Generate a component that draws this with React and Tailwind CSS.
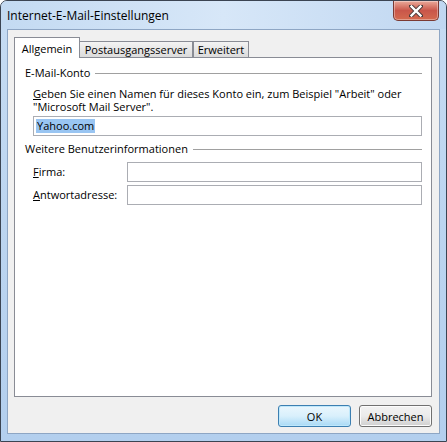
import React from 'react';

const font = { fontFamily: '"Open Sans", "Noto Sans", sans-serif' };

function CloseButton() {
  return (
    <div className="absolute right-[7px] top-0 w-[46px] h-[20px] rounded-b-[5px] border border-t-0 border-[#7b3a33] bg-gradient-to-b from-[#e9a99b] via-[#c9564a] to-[#d46a4f] flex items-center justify-center shadow-[inset_0_0_0_1px_rgba(255,255,255,0.35)]">
      <svg width="14" height="12" viewBox="0 0 14 12">
        <path
          d="M2 1 L12 11 M12 1 L2 11"
          stroke="#4a3a3a"
          strokeWidth="4.2"
          strokeLinecap="square"
          fill="none"
        />
        <path
          d="M2.5 1.5 L11.5 10.5 M11.5 1.5 L2.5 10.5"
          stroke="#ffffff"
          strokeWidth="2.4"
          strokeLinecap="square"
          fill="none"
        />
      </svg>
    </div>
  );
}

function Tab({ label, active, className = '' }) {
  if (active) {
    return (
      <div className={`relative z-10 h-[21px] pt-[3px] text-center bg-white border border-b-0 border-[#898c95] ${className}`}>
        {label}
      </div>
    );
  }
  return (
    <div className={`mt-[4px] h-[17px] text-center bg-gradient-to-b from-[#f3f3f3] to-[#dadada] border border-b-0 border-[#898c95] leading-[16px] ${className}`}>
      {label}
    </div>
  );
}

function GroupTitle({ children }) {
  return (
    <div className="flex items-center gap-[5px] h-[14px]">
      <span>{children}</span>
      <div className="flex-1 h-px bg-[#a0a0a0]" />
    </div>
  );
}

function Field({ children, className = '' }) {
  return (
    <div className={`h-[20px] border border-[#abadb3] bg-white ${className}`}>{children}</div>
  );
}

export default function App() {
  return (
    <div
      className="relative w-[447px] h-[442px] flex flex-col bg-gradient-to-b from-[#c6dcf3] via-[#bcd5f0] to-[#b3cfee] border border-[#3b4452] rounded-t-[7px] text-[11px] text-black overflow-hidden"
      style={font}
    >
      <div className="h-[28px] flex items-center pl-[6px] pt-[1px] bg-gradient-to-r from-[#c3daf2] via-[#d7e7f8] to-[#c0d7f1]">
        <span className="text-[12px]">Internet-E-Mail-Einstellungen</span>
      </div>
      <CloseButton />

      <div className="flex-1 mx-[6px] mb-[7px] border border-[#8ea6c4] bg-[#f0f0f0] flex flex-col pl-[6px] pr-[7px] pt-[7px]">
        <div className="flex items-end">
          <Tab label="Allgemein" active className="w-[66px]" />
          <Tab label="Postausgangsserver" className="w-[114px] -ml-px" />
          <Tab label="Erweitert" className="w-[56px]" />
        </div>

        <div className="-mt-px h-[340px] bg-white border border-[#898c95] pl-[10px] pr-[9px] pt-[8px]">
          <GroupTitle>E-Mail-Konto</GroupTitle>
          <div className="pl-[8px] pt-[7px]">
            <p className="leading-[13px]">
              <span className="underline">G</span>eben Sie einen Namen für dieses Konto ein, zum Beispiel "Arbeit" oder
              <br />
              "Microsoft Mail Server".
            </p>
            <Field className="mt-[3px] flex items-center pl-[2px]">
              <span className="bg-[#99c5f2] leading-[14px] px-px">Yahoo.com</span>
            </Field>
          </div>

          <div className="mt-[6px]">
            <GroupTitle>Weitere Benutzerinformationen</GroupTitle>
          </div>
          <div className="pl-[8px] pt-[6px] flex flex-col gap-[3px]">
            <div className="flex items-center">
              <span className="w-[94px]">
                <span className="underline">F</span>irma:
              </span>
              <Field className="flex-1" />
            </div>
            <div className="flex items-center">
              <span className="w-[94px]">
                <span className="underline">A</span>ntwortadresse:
              </span>
              <Field className="flex-1" />
            </div>
          </div>
        </div>

        <div className="flex justify-end gap-[8px] mt-[8px]">
          <button className="w-[73px] h-[22px] rounded-[3px] border border-[#3c7fb1] bg-gradient-to-b from-[#eaf6fd] via-[#d9f0fc] to-[#a7d9f5] shadow-[inset_0_0_0_1px_#bfe8fb] leading-none">
            OK
          </button>
          <button className="w-[73px] h-[22px] rounded-[3px] border border-[#707070] bg-gradient-to-b from-[#f2f2f2] via-[#ebebeb] to-[#cfcfcf] shadow-[inset_0_0_0_1px_#fcfcfc] leading-none">
            Abbrechen
          </button>
        </div>
      </div>
    </div>
  );
}
